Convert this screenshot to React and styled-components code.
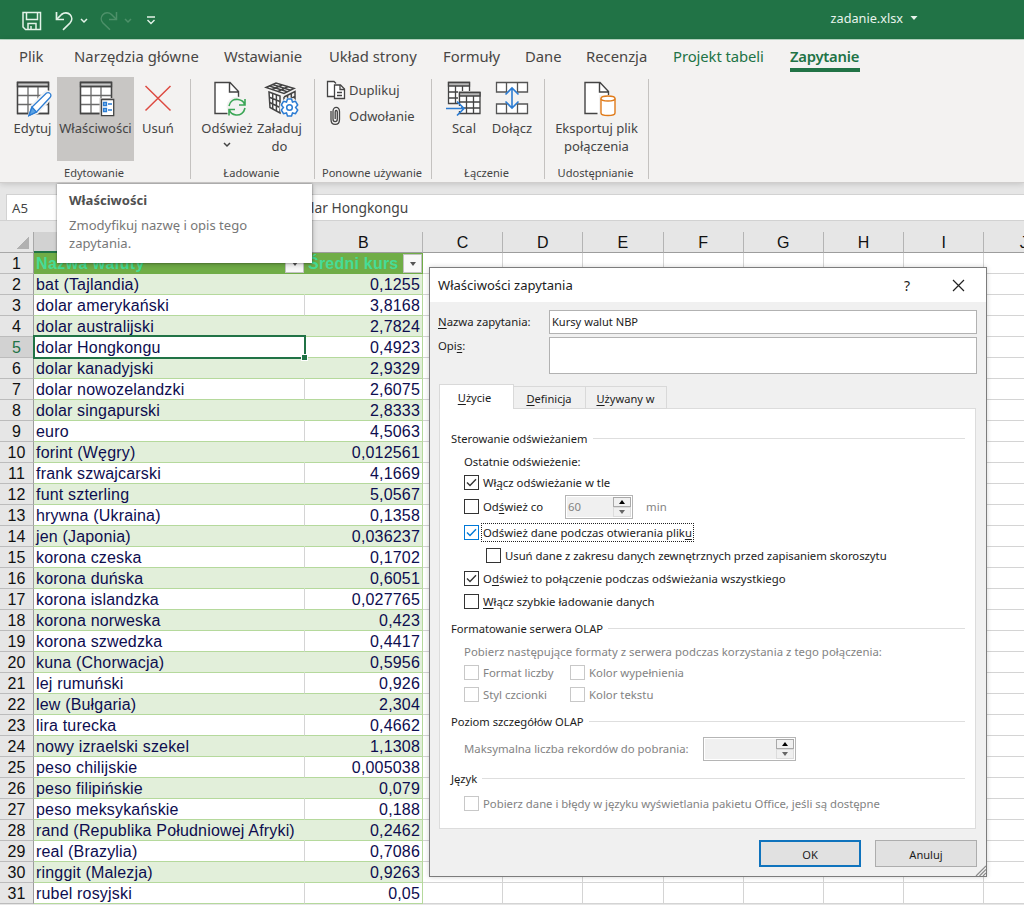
import React from 'react';
import styled, { createGlobalStyle, css } from 'styled-components';

const GlobalStyle = createGlobalStyle`
  * {
    box-sizing: border-box;
  }
  body {
    margin: 0;
    font-family: 'Noto Sans', 'Open Sans', sans-serif;
    color: #444;
  }
`;

const Window = styled.div`
  position: relative;
  width: 1024px;
  height: 905px;
  overflow: hidden;
  display: flex;
  flex-direction: column;
  background: #e6e6e6;
  white-space: nowrap;
`;

/* title bar */

const TitleBar = styled.header`
  height: 40px;
  flex: none;
  display: flex;
  align-items: center;
  justify-content: space-between;
  background: #217346;
  border-bottom: 1px solid #b9dcc6;
  padding: 0 106px 0 22px;
`;

const QuickAccess = styled.div`
  display: flex;
  align-items: center;
  padding-top: 2px;
`;

const FileName = styled.div`
  display: flex;
  align-items: center;
  gap: 7px;
  color: #e8f3ec;
  font-size: 12.7px;
  padding-bottom: 4px;
`;

/* ribbon */

const Ribbon = styled.section`
  height: 143px;
  flex: none;
  background: #f3f2f1;
  border-bottom: 1px solid #d0cecd;
  box-shadow: 0 1px 6px rgba(0, 0, 0, 0.16);
`;

const Tabs = styled.nav`
  height: 37px;
  display: flex;
`;

const Tab = styled.div`
  width: ${p => p.$width}px;
  height: 32px;
  margin-left: ${p => p.$gap}px;
  font-size: 14.8px;
  line-height: 33px;
  letter-spacing: ${p => p.$spacing || 0}px;
  color: ${p => (p.$green ? '#217346' : '#484644')};
  ${p =>
    p.$active &&
    css`
      font-size: 14.8px;
      font-weight: 600;
      letter-spacing: -0.24px;
      border-bottom: 4px solid #217346;
    `}
`;

const Groups = styled.div`
  height: 105px;
  display: flex;
`;

const Group = styled.div`
  position: relative;
  width: ${p => p.$width}px;
  height: 104px;
  display: flex;
  flex-direction: column;
  justify-content: space-between;
  &::after {
    content: '';
    position: absolute;
    right: 0;
    top: 2px;
    width: 1px;
    height: 100px;
    background: #c4c2c0;
  }
`;

const Tools = styled.div`
  display: flex;
  padding-left: ${p => p.$left}px;
`;

const GroupLabel = styled.div`
  font-size: 11.1px;
  line-height: 16px;
  height: 16px;
  text-align: center;
  padding-right: ${p => p.$shift || 0}px;
`;

const BigButton = styled.div`
  width: ${p => p.$width}px;
  height: 84px;
  display: flex;
  flex-direction: column;
  align-items: center;
  padding-top: 4px;
  font-size: 13px;
  line-height: 18px;
  text-align: center;
  background: ${p => (p.$pressed ? '#c8c6c4' : 'transparent')};
  svg {
    flex: none;
    margin-bottom: 2px;
    margin-left: ${p => p.$iconShift || 0}px;
  }
`;

const SmallTools = styled.div`
  display: flex;
  flex-direction: column;
  padding-left: 11px;
`;

const SmallButton = styled.div`
  height: 26px;
  display: flex;
  align-items: center;
  gap: 3px;
  font-size: 13px;
`;

/* formula bar */

const FormulaBar = styled.div`
  height: 27px;
  flex: none;
  margin-top: 11px;
  padding-left: 6px;
  display: flex;
  gap: 8px;
  line-height: 26px;
  border: solid #d2d2d2;
  border-width: 0 0 1px;
`;

const NameBox = styled.div`
  width: 150px;
  padding-left: 5px;
  border: 1px solid #d2d2d2;
  border-bottom: 0;
  background: #fff;
  font-size: 13.2px;
`;

const FormulaInput = styled.div`
  flex: 1;
  padding-left: 130px;
  background: #fff;
  border-top: 1px solid #d2d2d2;
  font-size: 13.8px;
`;

/* sheet */

const Sheet = styled.main`
  flex: 1;
  margin-top: 11px;
  min-height: 0;
  overflow: hidden;
  font-family: 'Liberation Sans', Arial, sans-serif;
  font-size: 16px;
  letter-spacing: 0.18px;
`;

const SheetRow = styled.div`
  display: grid;
  grid-template-columns: 34px 271px 118px repeat(7, 80.2px) 80.2px;
  grid-template-rows: 21px;
  width: 1065px;
`;

const Corner = styled.div`
  display: flex;
  align-items: flex-end;
  justify-content: flex-end;
  padding: 0 4px 3px 0;
  border: solid #a8a8a8;
  border-width: 0 1px 1px 0;
  &::after {
    content: '';
    border: solid transparent;
    border-width: 13px 0 0 13px;
    border-image: linear-gradient(135deg, transparent 50%, #b1b1b1 50%) 13;
  }
`;

const ColumnHead = styled.div`
  display: flex;
  align-items: center;
  justify-content: center;
  padding-top: 2px;
  color: #111;
  background: ${p => (p.$selected ? '#d2d2d2' : 'transparent')};
  border-right: 1px solid #b4b4b4;
  border-bottom: ${p => (p.$selected ? '2px solid #217346' : '1px solid #9d9d9d')};
`;

const RowHead = styled.div`
  line-height: 22px;
  text-align: center;
  color: ${p => (p.$selected ? '#217346' : '#111')};
  background: ${p => (p.$selected ? '#d2d2d2' : '#e6e6e6')};
  border-right: 1px solid ${p => (p.$selected ? '#217346' : '#9d9d9d')};
  border-bottom: 1px solid #bcbcbc;
`;

const EmptyCell = styled.div`
  background: #fff;
  border: solid #d4d4d4;
  border-width: 0 1px 1px 0;
`;

const NameCell = styled.div`
  position: relative;
  padding-left: 2px;
  line-height: 22px;
  color: #0d0d4f;
  background: ${p => (p.$band ? '#e2efda' : '#fff')};
  border-bottom: 1px solid #b5d99c;
  border-right: 1px solid ${p => (p.$band ? '#e2efda' : '#d4d4d4')};
`;

const RateCell = styled(NameCell)`
  padding: 0 2px 0 0;
  text-align: right;
  border-right-color: #b5d99c;
`;

const HeaderCell = styled.div`
  display: flex;
  justify-content: space-between;
  padding: 0 1px 0 ${p => p.$left}px;
  line-height: 22px;
  font-weight: bold;
  letter-spacing: ${p => p.$spacing}px;
  color: #45dc96;
  background: #70ad47;
`;

const FilterButton = styled.div`
  width: 19px;
  height: 19px;
  margin-top: 1px;
  display: flex;
  align-items: center;
  justify-content: center;
  background: #f8f8f8;
  border: 1px solid #c2c2c2;
  &::after {
    content: '';
    border: solid transparent;
    border-width: 4px 3.5px 0;
    border-top-color: #555;
  }
`;

const Cursor = styled.div`
  position: absolute;
  left: -1px;
  top: -2px;
  right: -2px;
  bottom: -2px;
  border: 2px solid #217346;
  z-index: 1;
  &::after {
    content: '';
    position: absolute;
    right: -3px;
    bottom: -3px;
    width: 5px;
    height: 5px;
    background: #217346;
    outline: 1px solid #fff;
  }
`;

/* tooltip over the ribbon button */

const Tooltip = styled.aside`
  position: absolute;
  left: 57px;
  top: 184px;
  width: 255px;
  height: 79px;
  padding: 7px 12px;
  background: #fff;
  box-shadow: 0 0 2px rgba(0, 0, 0, 0.45), 1px 2px 5px rgba(0, 0, 0, 0.2);
  font-size: 13.05px;
  line-height: 18px;
  color: #777;
  z-index: 2;
`;

const TooltipTitle = styled.div`
  margin-bottom: 7px;
  font-weight: bold;
  color: #505050;
`;

/* dialog */

const Dialog = styled.div`
  position: absolute;
  left: 429px;
  top: 267px;
  width: 558px;
  height: 610px;
  display: flex;
  flex-direction: column;
  background: #f0f0f0;
  border: 1px solid #7c7c7c;
  box-shadow: 0 0 5px rgba(0, 0, 0, 0.18);
  color: #1c1c1c;
  font-size: 11.35px;
  z-index: 3;
`;

const DialogTitle = styled.div`
  height: 34px;
  flex: none;
  display: flex;
  align-items: center;
  padding: 0 21px 0 8px;
  background: #fff;
  font-size: 13.05px;
`;

const HelpMark = styled.span`
  margin-left: auto;
  margin-right: 42px;
  font-size: 14px;
`;

const Fields = styled.div`
  display: grid;
  grid-template-columns: 111px 428px;
  grid-template-rows: 24px 37px;
  row-gap: 3px;
  padding: 8px 0 0 8px;
  line-height: 24px;
`;

const Field = styled.div`
  padding-left: 2px;
  line-height: 21px;
  background: #fff;
  border: 1px solid #b2b2b2;
  font-size: 11.1px;
`;

const FieldLabel = styled.div`
  line-height: ${p => p.$line || 24}px;
`;

const DialogTabs = styled.div`
  height: 25px;
  margin: 10px 0 0 9px;
  display: flex;
  align-items: flex-end;
  position: relative;
  z-index: 1;
`;

const DialogTab = styled.div`
  width: ${p => p.$width}px;
  height: 23px;
  padding-right: 1px;
  line-height: 23px;
  text-align: center;
  font-size: 11.1px;
  border: 1px solid #d9d9d9;
  border-left: 0;
  ${p =>
    p.$active &&
    css`
      height: 25px;
      padding: 0 4px 0 0;
      line-height: 26px;
      background: #fff;
      border-left: 1px solid #d9d9d9;
      border-bottom: 0;
    `}
`;

const Panel = styled.div`
  width: 537px;
  height: 421px;
  margin: -1px 0 0 9px;
  padding: 18px 10px 0 11px;
  background: #fff;
  border: 1px solid #dcdcdc;
`;

const SectionTitle = styled.div`
  height: ${p => p.$height}px;
  display: flex;
  align-items: center;
  gap: 5px;
  font-size: 11.2px;
  &::after {
    content: '';
    flex: 1;
    height: 1px;
    background: #dedede;
  }
`;

const Option = styled.div`
  height: ${p => p.$height}px;
  display: flex;
  align-items: center;
  margin-left: ${p => p.$indent || 13}px;
  color: ${p => (p.$disabled ? '#838383' : 'inherit')};
  letter-spacing: ${p => p.$spacing || 0}px;
`;

const Check = styled.span`
  width: 15px;
  height: 15px;
  flex: none;
  display: flex;
  margin: 0 3px 0 0;
  color: ${p => (p.$focus ? '#0078d7' : '#333')};
  border: 1px solid ${p => (p.$disabled ? '#c8c8c8' : 'currentColor')};
`;

const OptionText = styled.span`
  width: ${p => (p.$width ? `${p.$width}px` : 'auto')};
  line-height: 17px;
  padding: 0 1px;
  ${p =>
    p.$focus &&
    css`
      outline: 1px dotted #222;
    `}
`;

const Key = styled.span`
  text-decoration: underline;
  text-underline-offset: 2px;
`;

const Spinner = styled.div`
  width: ${p => p.$width}px;
  height: 24px;
  flex: none;
  display: flex;
  justify-content: space-between;
  padding: 1px;
  line-height: 20px;
  background: #f0f0f0;
  border: 1px solid #b5b5b5;
  box-shadow: inset 0 0 0 1px #fff;
`;

const SpinnerValue = styled.span`
  padding-left: 1px;
`;

const Arrows = styled.span`
  width: 18px;
  display: flex;
  flex-direction: column;
`;

const Arrow = styled.span`
  flex: 1;
  display: flex;
  align-items: center;
  justify-content: center;
  border: 1px solid ${p => (p.$up ? '#a9a9a9' : '#dcdcdc')};
  &::after {
    content: '';
    border: solid transparent;
    border-width: ${p => (p.$up ? '0 3.5px 4px' : '4px 3.5px 0')};
    ${p => (p.$up ? 'border-bottom-color: #000' : 'border-top-color: #666')};
  }
`;

const Unit = styled.span`
  margin-left: 13px;
`;

const Actions = styled.div`
  display: flex;
  justify-content: flex-end;
  gap: 14px;
  padding: 11px 9px 0 0;
`;

const Action = styled.button`
  width: 102px;
  height: 27px;
  padding: 1px 0 0;
  font: 11.1px 'Noto Sans', sans-serif;
  color: #1c1c1c;
  background: #e1e1e1;
  border: ${p => (p.$primary ? '2px solid #0f73bd' : '1px solid #adadad')};
`;

const Grip = styled.svg`
  position: absolute;
  right: 0;
  bottom: 0;
`;

const Svg = ({ w = 36, h = 36, children, ...rest }) => (
  <svg width={w} height={h} viewBox={`0 0 ${w} ${h}`} fill="none" {...rest}>
    {children}
  </svg>
);

const SaveIcon = () => (
  <Svg w={20} h={20} stroke="#e3f2e8" strokeWidth="1.5">
    <path d="M1 1.5H18.5V18.5H3.5L1 16Z" />
    <path d="M4.5 1.5V8.5H15.5V1.5M6 18.5V12.5H14V18.5M9 18V15" />
  </Svg>
);

const UndoIcon = () => (
  <Svg w={18} h={20} stroke="#e3f2e8" strokeWidth="1.7" style={{ marginLeft: 13 }}>
    <path d="M1.500 1V8.500H9" />
    <path d="M1.500 8.500L6.500 3.500C9 1.200 13 1.300 15.200 3.700C17.300 6 17.300 9.500 15 12L8 18.800" />
  </Svg>
);

const RedoIcon = () => (
  <Svg w={18} h={20} stroke="#4d9069" strokeWidth="1.5" style={{ marginLeft: 12 }}>
    <path d="M16.500 1V8.500H9" />
    <path d="M16.500 8.500L11.500 3.500C9 1.200 5 1.300 2.800 3.700C0.700 6 0.700 9.500 3 12L10 18.800" />
  </Svg>
);

const Chevron = ({ color = '#e3f2e8', left = 6, top = 0 }) => (
  <Svg w={8} h={6} stroke={color} strokeWidth="1.5" style={{ marginLeft: left, marginTop: top }}>
    <path d="M1 1L4 4L7 1" />
  </Svg>
);

const MoreIcon = () => (
  <Svg w={10} h={9} stroke="#e3f2e8" strokeWidth="1.4" style={{ marginLeft: 14 }}>
    <path d="M1 1H9M1.500 4L5 7.500L8.500 4" />
  </Svg>
);

const GridShape = () => (
  <>
    <path d="M1.500 1.500H32.500V32.500H1.500Z" fill="#fff" />
    <path d="M1.500 1.500H32.500V5.500H1.500Z" fill="#c9c9c9" />
    <path d="M1.500 14.500H32.500M1.500 23.500H32.500M12 5.500V32.500M22 5.500V32.500" stroke="#6a6a6a" />
    <path d="M1.500 1.500H32.500V32.500H1.500ZM1.500 5.500H32.500" />
  </>
);

const EditIcon = () => (
  <Svg stroke="#444" strokeWidth="1.3">
    <GridShape />
    <path d="M14 34L16.500 25L30 11.500Q33 10.500 34.500 13.500Q35.500 15 34 17L21 31Z" stroke="#f3f2f1" strokeWidth="4" fill="#f3f2f1" />
    <path d="M13 34.500L16 26L30.500 12Q33 10.800 34.500 13Q35.500 15 34 16.500L20.500 31Z" stroke="#2b7cd3" fill="#fff" />
    <path d="M13 34.500L16 26L20.500 31Z" fill="#5ba3e4" stroke="#2b7cd3" />
  </Svg>
);

const PropertiesIcon = () => (
  <Svg stroke="#444" strokeWidth="1.3">
    <GridShape />
    <path d="M20.500 17H36V36H20.500Z" fill="#c8c6c4" stroke="none" />
    <path d="M22.500 18.500H34.700V34.700H22.500Z" fill="#fff" />
    <path d="M24.500 21.500H27.500V24.500H24.500ZM24.500 27.500H27.500V30.500H24.500Z" stroke="#2b7cd3" fill="#8dbff0" />
    <path d="M29 23H33M29 29H33" stroke="#2b7cd3" />
  </Svg>
);

const DeleteIcon = () => (
  <Svg w={28} h={36} stroke="#dd4b42" strokeWidth="1.5">
    <path d="M1.500 5L26.500 29.500M26.500 5L1.500 29.500" />
  </Svg>
);

const PageShape = () => (
  <>
    <path d="M2 1.500H17L25.500 10.500V32.500H2Z" fill="#fff" stroke="none" />
    <path d="M14.500 32.500H2V1.500H17L25.500 10.500V16M16.500 1.500V11H25.500" />
  </>
);

const RefreshIcon = () => (
  <Svg stroke="#444" strokeWidth="1.4">
    <PageShape />
    <circle cx="24" cy="26" r="10.500" fill="#f3f2f1" stroke="none" />
    <g stroke="#3aa655" strokeWidth="1.600">
      <path d="M16 25C17 20 21 18 25 18.500C28.500 19 31 21 31.500 23.500M32 18V24H26" />
      <path d="M32 27C31 32 27 34.500 23 34C19.500 33.500 17 31 16.500 29M16 34.500V28.500H22" />
    </g>
  </Svg>
);

const LoadIcon = () => (
  <Svg stroke="#444" strokeWidth="1.500">
    <path d="M2 6.500L12 2L30 7.500L20 12.500Z" fill="#fff" />
    <path d="M5.300 5L23.300 10.800M8.600 3.500L26.600 9.200M8 8.500L18 4M14 10.500L24 5.500" />
    <path d="M5 11L16 15V32L6 26.500Z" fill="#fff" />
    <path d="M8.700 12.300V28M12.400 13.700V30M5.300 16.200L16 20.500M5.700 21.500L16 26.500" />
    <path d="M20 16L31 10.500V20M20 16V26M20 21L31 15.500M23.600 14V24M27.300 12V22" />
    <circle cx="25.500" cy="26.500" r="10" fill="#f3f2f1" stroke="none" />
    <path d="M23.500 18H27.500L28.500 21L31.500 20.300L33.700 24L31.600 26.500L33.700 29L31.500 32.700L28.500 32L27.500 35H23.500L22.500 32L19.500 32.700L17.300 29L19.400 26.500L17.300 24L19.500 20.300L22.500 21Z" stroke="#2b7cd3" fill="#fff" />
    <circle cx="25.500" cy="26.500" r="2.800" stroke="#2b7cd3" />
  </Svg>
);

const CopyIcon = () => (
  <Svg w={20} h={20} stroke="#444" strokeWidth="1.300">
    <path d="M8 16.500H1.500V1.500H8L10 3.500" fill="#fff" />
    <path d="M8.500 5H14.500L18.500 9V18.500H8.500Z" fill="#fff" />
    <path d="M14 5V9.500H18.500M11 12.500H16M11 15.500H16" />
  </Svg>
);

const ClipIcon = () => (
  <Svg w={20} h={20} stroke="#444" strokeWidth="1.300">
    <path d="M5 5V13.500C5 20 13.500 20 13.500 13.500V5.500C13.500 0 7 0 7 5.500V13C7 16.500 11.300 16.500 11.300 13V6C11.300 4 9.200 4 9.200 6V13" />
  </Svg>
);

const MergeIcon = () => (
  <Svg stroke="#444" strokeWidth="1.300">
    <path d="M2.500 1.500H23.500V22.500H2.500Z" fill="#fff" />
    <path d="M2.500 1.500H23.500V5H2.500Z" fill="#b8b8b8" />
    <path d="M2.500 11H23M2.500 17H23M9.500 5V22M16.500 5V22" />
    <path d="M12 10H36V36H12Z" fill="#f3f2f1" stroke="none" />
    <path d="M13.500 11.500H34V32.500H13.500Z" fill="#fff" />
    <path d="M13.500 11.500H34V15H13.500Z" fill="#b8b8b8" />
    <path d="M13.500 21H34M13.500 27H34M20.500 15V32M27.500 15V32" />
    <path d="M0 27.500H15" stroke="#f3f2f1" strokeWidth="5" />
    <path d="M0 27.500H17.500M11 20.500L18 27.500L11 34.500" stroke="#2b7cd3" strokeWidth="1.700" />
  </Svg>
);

const AppendIcon = () => (
  <Svg stroke="#555" strokeWidth="1.300">
    <path d="M2.500 1.500H33.500V11H2.500ZM2.500 23H33.500V32.500H2.500Z" fill="#fff" />
    <path d="M12.500 1.500V11M23.500 1.500V11M12.500 23V32.500M23.500 23V32.500" />
    <path d="M13.500 9H22.500V26H13.500Z" fill="#f3f2f1" stroke="none" />
    <path d="M18 7.500V27M11.500 13.500L18 7L24.500 13.500M11.500 20.500L18 27L24.500 20.500" stroke="#2b7cd3" strokeWidth="1.600" />
  </Svg>
);

const ExportIcon = () => (
  <Svg stroke="#444" strokeWidth="1.400">
    <PageShape />
    <path d="M16 14H35V36H16Z" fill="#f3f2f1" stroke="none" />
    <g stroke="#e07b1a">
      <path d="M18 17.500V32C18 35.300 32 35.300 32 32V17.500" fill="#fff" />
      <ellipse cx="25" cy="17.500" rx="7" ry="2.500" fill="#fff" />
    </g>
  </Svg>
);

const CheckMark = () => (
  <Svg w={13} h={13} stroke="currentColor" strokeWidth="1.400">
    <path d="M2 6.500L5 9.500L11 3.300" />
  </Svg>
);

const CloseIcon = () => (
  <Svg w={13} h={13} stroke="#222" strokeWidth="1.200">
    <path d="M1 1L12 12M12 1L1 12" />
  </Svg>
);

const tabs = [
  { label: 'Plik', gap: 19, width: 25 },
  { label: 'Narzędzia główne', gap: 30, width: 125, spacing: 0.08 },
  { label: 'Wstawianie', gap: 25, width: 79, spacing: -0.14 },
  { label: 'Układ strony', gap: 26, width: 88 },
  { label: 'Formuły', gap: 26, width: 57 },
  { label: 'Dane', gap: 25, width: 36 },
  { label: 'Recenzja', gap: 25, width: 61 },
  { label: 'Projekt tabeli', gap: 26, width: 92, spacing: -0.06, green: true },
  { label: 'Zapytanie', gap: 25, width: 70, green: true, active: true }
];

const rates = [
  ['bat (Tajlandia)', '0,1255'],
  ['dolar amerykański', '3,8168'],
  ['dolar australijski', '2,7824'],
  ['dolar Hongkongu', '0,4923'],
  ['dolar kanadyjski', '2,9329'],
  ['dolar nowozelandzki', '2,6075'],
  ['dolar singapurski', '2,8333'],
  ['euro', '4,5063'],
  ['forint (Węgry)', '0,012561'],
  ['frank szwajcarski', '4,1669'],
  ['funt szterling', '5,0567'],
  ['hrywna (Ukraina)', '0,1358'],
  ['jen (Japonia)', '0,036237'],
  ['korona czeska', '0,1702'],
  ['korona duńska', '0,6051'],
  ['korona islandzka', '0,027765'],
  ['korona norweska', '0,423'],
  ['korona szwedzka', '0,4417'],
  ['kuna (Chorwacja)', '0,5956'],
  ['lej rumuński', '0,926'],
  ['lew (Bułgaria)', '2,304'],
  ['lira turecka', '0,4662'],
  ['nowy izraelski szekel', '1,1308'],
  ['peso chilijskie', '0,005038'],
  ['peso filipińskie', '0,079'],
  ['peso meksykańskie', '0,188'],
  ['rand (Republika Południowej Afryki)', '0,2462'],
  ['real (Brazylia)', '0,7086'],
  ['ringgit (Malezja)', '0,9263'],
  ['rubel rosyjski', '0,05']
];

const columns = ['C', 'D', 'E', 'F', 'G', 'H', 'I', 'J'];
const SELECTED_ROW = 5;

const emptyCells = () => columns.map(name => <EmptyCell key={name} />);

const RibbonPanel = () => (
  <Ribbon>
    <Tabs>
      {tabs.map(tab => (
        <Tab
          key={tab.label}
          $width={tab.width}
          $gap={tab.gap}
          $spacing={tab.spacing}
          $green={tab.green}
          $active={tab.active}
        >
          {tab.label}
        </Tab>
      ))}
    </Tabs>
    <Groups>
      <Group $width={191}>
        <Tools $left={8}>
          <BigButton $width={49} $iconShift={2}>
            <EditIcon />
            Edytuj
          </BigButton>
          <BigButton $width={77} $pressed $iconShift={2}>
            <PropertiesIcon />
            Właściwości
          </BigButton>
          <BigButton $width={48}>
            <DeleteIcon />
            Usuń
          </BigButton>
        </Tools>
        <GroupLabel $shift={3}>Edytowanie</GroupLabel>
      </Group>
      <Group $width={124}>
        <Tools $left={10}>
          <BigButton $width={52} $iconShift={8}>
            <RefreshIcon />
            Odśwież
            <Chevron color="#444" left={0} top={5} />
          </BigButton>
          <BigButton $width={53} $iconShift={5}>
            <LoadIcon />
            Załaduj
            <br />
            do
          </BigButton>
        </Tools>
        <GroupLabel $shift={3}>Ładowanie</GroupLabel>
      </Group>
      <Group $width={117}>
        <SmallTools>
          <SmallButton>
            <CopyIcon />
            Duplikuj
          </SmallButton>
          <SmallButton>
            <ClipIcon />
            Odwołanie
          </SmallButton>
        </SmallTools>
        <GroupLabel $shift={3}>Ponowne używanie</GroupLabel>
      </Group>
      <Group $width={113}>
        <Tools $left={8}>
          <BigButton $width={48}>
            <MergeIcon />
            Scal
          </BigButton>
          <BigButton $width={48}>
            <AppendIcon />
            Dołącz
          </BigButton>
        </Tools>
        <GroupLabel $shift={4}>Łączenie</GroupLabel>
      </Group>
      <Group $width={104}>
        <Tools $left={8}>
          <BigButton $width={87} $iconShift={9}>
            <ExportIcon />
            Eksportuj plik
            <br />
            połączenia
          </BigButton>
        </Tools>
        <GroupLabel $shift={3}>Udostępnianie</GroupLabel>
      </Group>
    </Groups>
  </Ribbon>
);

const SheetGrid = () => (
  <Sheet>
    <SheetRow>
      <Corner />
      <ColumnHead $selected>A</ColumnHead>
      <ColumnHead>B</ColumnHead>
      {columns.map(name => (
        <ColumnHead key={name}>{name}</ColumnHead>
      ))}
    </SheetRow>
    <SheetRow>
      <RowHead>1</RowHead>
      <HeaderCell $left={2} $spacing={0.4}>
        Nazwa waluty
        <FilterButton />
      </HeaderCell>
      <HeaderCell $left={3} $spacing={0.22}>
        Średni kurs
        <FilterButton />
      </HeaderCell>
      {emptyCells()}
    </SheetRow>
    {rates.map(([name, rate], i) => {
      const row = i + 2;
      const selected = row === SELECTED_ROW;
      return (
        <SheetRow key={name}>
          <RowHead $selected={selected}>{row}</RowHead>
          <NameCell $band={row % 2 === 0}>
            {name}
            {selected && <Cursor />}
          </NameCell>
          <RateCell $band={row % 2 === 0}>{rate}</RateCell>
          {emptyCells()}
        </SheetRow>
      );
    })}
  </Sheet>
);

const NumberSpinner = ({ width, value }) => (
  <Spinner $width={width}>
    <SpinnerValue>{value}</SpinnerValue>
    <Arrows>
      <Arrow $up />
      <Arrow />
    </Arrows>
  </Spinner>
);

const QueryDialog = () => (
  <Dialog>
    <DialogTitle>
      Właściwości zapytania
      <HelpMark>?</HelpMark>
      <CloseIcon />
    </DialogTitle>
    <Fields>
      <FieldLabel>
        <Key>N</Key>azwa zapytania:
      </FieldLabel>
      <Field>Kursy walut NBP</Field>
      <FieldLabel $line={18}>
        Opi<Key>s</Key>:
      </FieldLabel>
      <Field />
    </Fields>
    <DialogTabs>
      <DialogTab $width={75} $active>
        <Key>U</Key>życie
      </DialogTab>
      <DialogTab $width={72}>
        <Key>D</Key>efinicja
      </DialogTab>
      <DialogTab $width={81}>
        <Key>U</Key>żywany w
      </DialogTab>
    </DialogTabs>
    <Panel>
      <SectionTitle $height={22}>Sterowanie odświeżaniem</SectionTitle>
      <Option $height={24}>Ostatnie odświeżenie:</Option>
      <Option $height={18}>
        <Check>
          <CheckMark />
        </Check>
        <OptionText>
          Wł<Key>ą</Key>cz odświeżanie w tle
        </OptionText>
      </Option>
      <Option $height={31}>
        <Check />
        <OptionText $width={83}>
          Od<Key>ś</Key>wież co
        </OptionText>
        <Option as="span" $indent={0.1} $disabled>
          <NumberSpinner width={68} value="60" />
          <Unit>min</Unit>
        </Option>
      </Option>
      <Option $height={20}>
        <Check $focus>
          <CheckMark />
        </Check>
        <OptionText $focus>
          Odśwież dane podczas otwierania plik<Key>u</Key>
        </OptionText>
      </Option>
      <Option $height={26} $indent={35} $spacing={-0.04}>
        <Check />
        <OptionText>
          Usuń dane z zakresu dan<Key>y</Key>ch zewnętrznych przed zapisaniem skoroszytu
        </OptionText>
      </Option>
      <Option $height={20} $spacing={0.05}>
        <Check>
          <CheckMark />
        </Check>
        <OptionText>
          O<Key>d</Key>śwież to połączenie podczas odświeżania wszystkiego
        </OptionText>
      </Option>
      <Option $height={26}>
        <Check />
        <OptionText>
          <Key>W</Key>łącz szybkie ładowanie danych
        </OptionText>
      </Option>
      <SectionTitle $height={28}>Formatowanie serwera OLAP</SectionTitle>
      <Option $height={18} $disabled $spacing={0.04}>
        Pobierz następujące formaty z serwera podczas korzystania z tego połączenia:
      </Option>
      <Option $height={24} $disabled>
        <Check $disabled />
        <OptionText $width={88}>Format liczby</OptionText>
        <Check $disabled />
        <OptionText>Kolor wypełnienia</OptionText>
      </Option>
      <Option $height={21} $disabled>
        <Check $disabled />
        <OptionText $width={88}>Styl czcionki</OptionText>
        <Check $disabled />
        <OptionText>Kolor tekstu</OptionText>
      </Option>
      <SectionTitle $height={33}>Poziom szczegółów OLAP</SectionTitle>
      <Option $height={21} $indent={12} $disabled>
        <OptionText $width={240}>Maksymalna liczba rekordów do pobrania:</OptionText>
        <NumberSpinner width={93} />
      </Option>
      <SectionTitle $height={38}>Język</SectionTitle>
      <Option $height={12} $disabled $spacing={-0.02}>
        <Check $disabled />
        <OptionText>
          Pobierz dane i błędy w języku wyświetlania pakietu Office, jeśli są dostępne
        </OptionText>
      </Option>
    </Panel>
    <Actions>
      <Action $primary>OK</Action>
      <Action>Anuluj</Action>
    </Actions>
    <Grip width="11" height="11" viewBox="0 0 11 11" stroke="#8a8a8a" strokeWidth="1.200">
      <path d="M1 11L11 1M4.500 11L11 4.500M8 11L11 8" />
    </Grip>
  </Dialog>
);

const App = () => (
  <Window>
    <GlobalStyle />
    <TitleBar>
      <QuickAccess>
        <SaveIcon />
        <UndoIcon />
        <Chevron left={7} />
        <RedoIcon />
        <Chevron color="#4d9069" left={6} />
        <MoreIcon />
      </QuickAccess>
      <FileName>
        zadanie.xlsx
        <Svg w={8} h={4}>
          <path d="M0.500 0H7.500L4 4Z" fill="#e8f3ec" />
        </Svg>
      </FileName>
    </TitleBar>
    <RibbonPanel />
    <FormulaBar>
      <NameBox>A5</NameBox>
      <FormulaInput>dolar Hongkongu</FormulaInput>
    </FormulaBar>
    <SheetGrid />
    <Tooltip>
      <TooltipTitle>Właściwości</TooltipTitle>
      Zmodyfikuj nazwę i opis tego
      <br />
      zapytania.
    </Tooltip>
    <QueryDialog />
  </Window>
);

export default App;
